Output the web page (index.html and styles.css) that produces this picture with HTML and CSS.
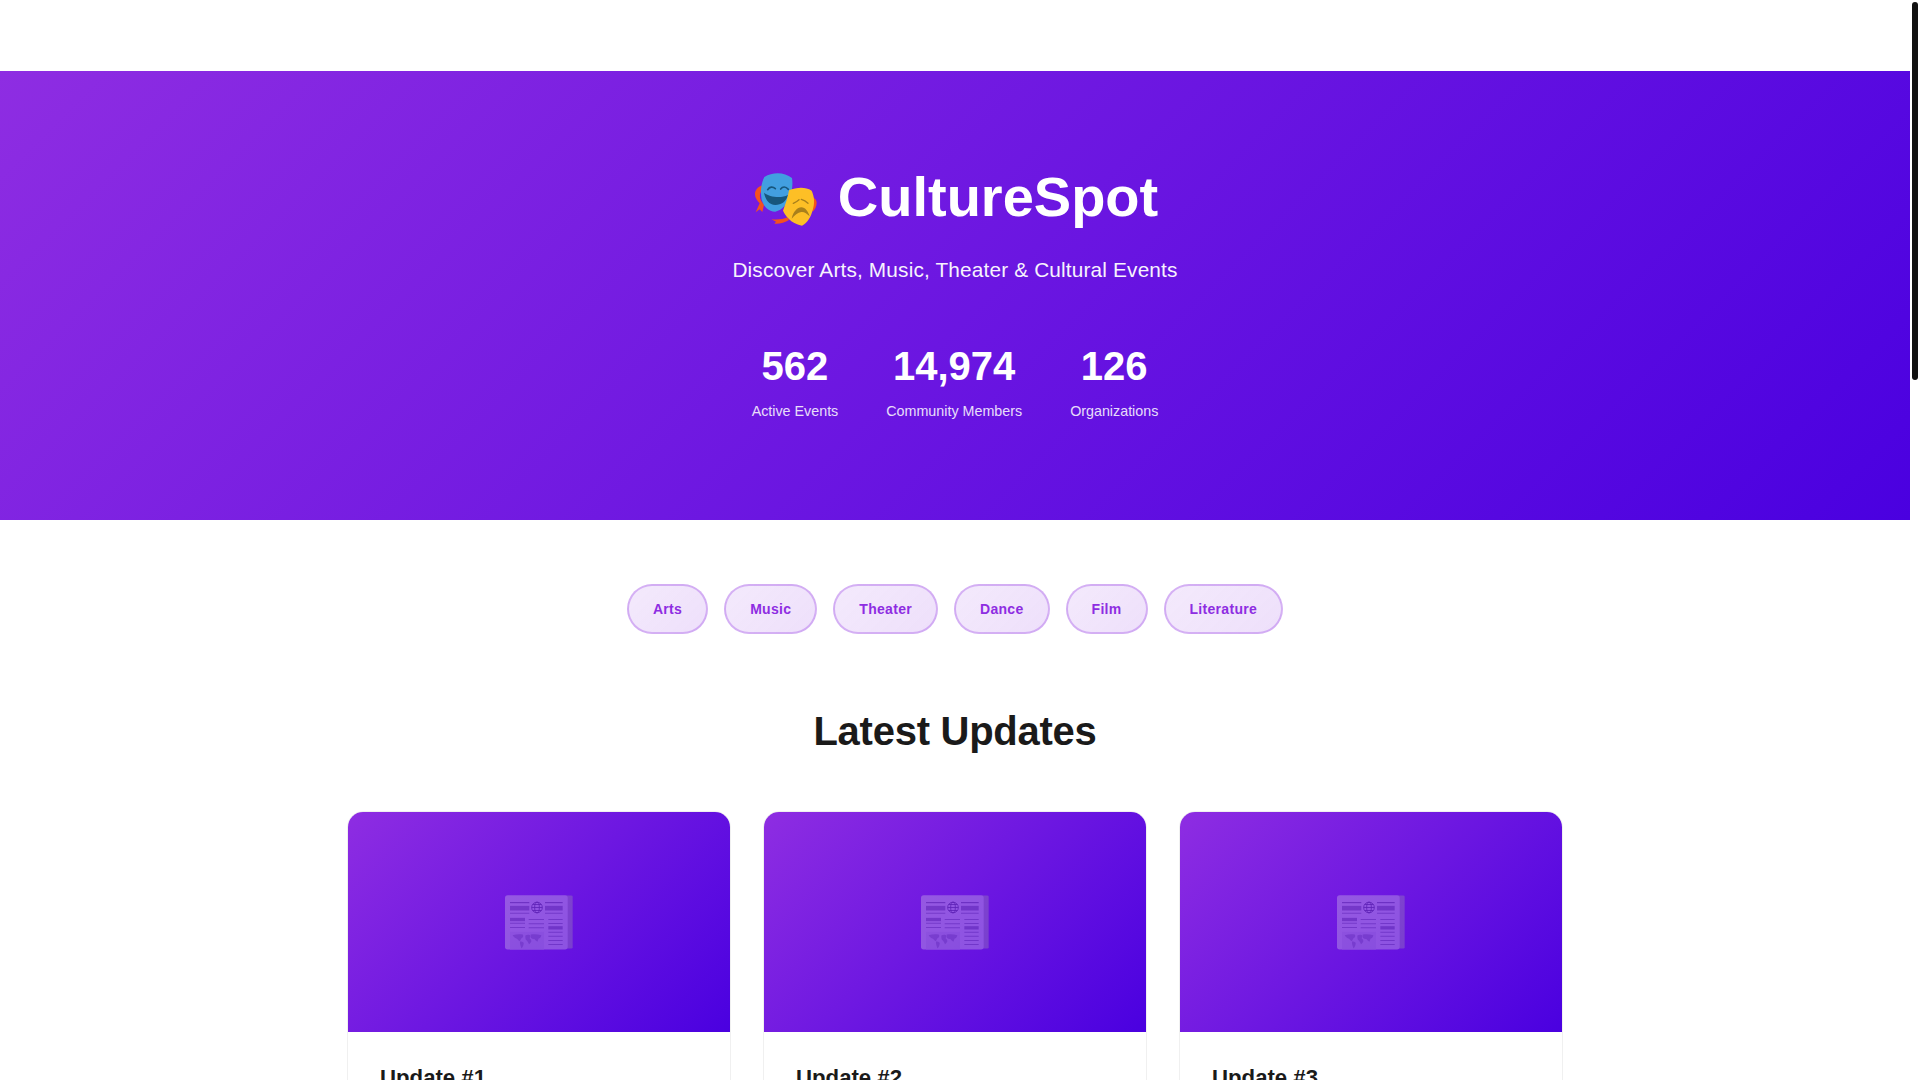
FILE: index.html
```html
<!DOCTYPE html>
<html lang="en">
<head>
    <meta charset="UTF-8">
    <meta name="viewport" content="width=device-width, initial-scale=1.0">
    <title>CultureSpot</title>
    <link rel="stylesheet" href="styles.css">
</head>
<body>
    <!-- Newspaper icon used on the cards -->
    <svg class="icon-defs" xmlns="http://www.w3.org/2000/svg">
        <symbol id="newspaper" viewBox="45 45 204 164">
            <rect x="225" y="46" width="23" height="159" rx="4" fill="#a8a8a8"/>
            <rect x="45" y="45" width="188" height="163" rx="8" fill="#e6e6e6"/>
            <g fill="#55556f">
                <rect x="60" y="66" width="58" height="3"/>
                <rect x="165" y="66" width="53" height="3"/>
                <rect x="60" y="77" width="58" height="14" opacity="0.7"/>
                <rect x="165" y="77" width="53" height="14" opacity="0.7"/>
                <rect x="60" y="98" width="58" height="2"/>
                <rect x="165" y="98" width="53" height="2"/>
                <rect x="60" y="113" width="45" height="10" opacity="0.7"/>
                <rect x="60" y="128" width="45" height="2"/>
                <rect x="60" y="141" width="45" height="2"/>
                <rect x="116" y="117" width="46" height="2"/>
                <rect x="116" y="130" width="46" height="2"/>
                <rect x="116" y="142" width="46" height="2"/>
                <rect x="175" y="117" width="43" height="2"/>
                <rect x="175" y="129" width="43" height="2"/>
                <rect x="175" y="138" width="43" height="10" opacity="0.7"/>
                <rect x="175" y="155" width="43" height="2"/>
                <rect x="175" y="167" width="43" height="2"/>
                <rect x="175" y="180" width="43" height="2"/>
                <rect x="175" y="192" width="43" height="2"/>
            </g>
            <g fill="none" stroke="#3a3a58" stroke-width="2.5">
                <circle cx="141" cy="82" r="16"/>
                <ellipse cx="141" cy="82" rx="7" ry="16"/>
                <path d="M125 82h32M128 73h26M128 91h26"/>
            </g>
            <rect x="60" y="155" width="102" height="53" fill="#d4d4dc"/>
            <path d="M68 165c10-3 20-4 30-2 3 3 2 7-1 10-4 2-5 6-7 10-4-1-6-4-9-7-5-2-10-6-13-11zM90 184c5 0 9 1 11 4 1 5-2 12-6 17-3-6-6-14-5-21zM106 166c4-3 10-3 14-1 2 3 0 6-1 9 3 3 6 6 5 10-2 3-4 7-7 8-3-5-5-11-10-14-1-4-1-8-1-12zM122 163c11-2 22-1 32 2-1 5-4 9-8 10-2 3-2 6-3 9-4-1-7-4-9-7-5 0-9-1-12-5 0-3 0-6 0-9z" fill="#55556f" opacity="0.5"/>
        </symbol>
    </svg>

    <div class="window">
        <div class="page">
            <div class="top-bar"></div>

            <!-- Hero -->
            <header class="hero">
                <h1>
                    <svg class="masks" xmlns="http://www.w3.org/2000/svg" viewBox="24 9 210 201" role="img" aria-label="Performing arts">
                        <g fill="#f4511e">
                            <path d="M60 74c-14 3-26 13-27 26-1 12 6 22 14 30l-12 27 12-9 8 8 5-22c-7-7-14-18-12-30 1-9 8-15 14-18z"/>
                            <path d="M130 172c-12 6-30 8-48 6l14 7-5 6c16 1 32-3 44-11z"/>
                            <path d="M200 109c10 3 18 10 18 19 0 12-6 21-12 27l-4-9c4-6 6-12 5-18-1-3-4-6-8-8z"/>
                        </g>
                        <path d="M61 51c26-16 60-15 83 3 3 18 1 40-8 60-8 19-20 36-42 41-22-2-34-14-41-36-4-22-3-46 8-68z" fill="#429fe0"/>
                        <g fill="none" stroke="#17567d" stroke-width="5" stroke-linecap="round">
                            <path d="M71 89c6-9 15-10 23-3"/>
                            <path d="M110 87c6-8 15-8 23 1"/>
                        </g>
                        <path d="M60 98c16 13 50 18 72 7-5 20-20 30-38 30-18-1-30-16-34-37z" fill="#17567d"/>
                        <path d="M135 91c22-9 48-12 68 1 8 17 10 38 3 58-5 20-15 39-32 47-22-4-44-18-57-45 7-19 15-40 18-61z" fill="#fdbf26"/>
                        <g fill="none" stroke="#a9801c" stroke-width="4" stroke-linecap="round">
                            <path d="M148 130c6-3 12-6 17-11"/>
                            <path d="M172 118c7 2 14 6 20 12"/>
                        </g>
                        <path d="M143 176c4-20 17-34 29-34 12 1 20 11 25 27-8-8-16-14-25-13-11 1-20 10-29 20z" fill="#a9801c"/>
                    </svg>
                    <span>CultureSpot</span>
                </h1>
                <p class="tagline">Discover Arts, Music, Theater &amp; Cultural Events</p>
                <div class="stats">
                    <div class="stat">
                        <div class="stat-number">562</div>
                        <div class="stat-label">Active Events</div>
                    </div>
                    <div class="stat">
                        <div class="stat-number">14,974</div>
                        <div class="stat-label">Community Members</div>
                    </div>
                    <div class="stat">
                        <div class="stat-number">126</div>
                        <div class="stat-label">Organizations</div>
                    </div>
                </div>
            </header>

            <!-- Categories -->
            <nav class="categories">
                <button class="pill">Arts</button>
                <button class="pill">Music</button>
                <button class="pill">Theater</button>
                <button class="pill">Dance</button>
                <button class="pill">Film</button>
                <button class="pill">Literature</button>
            </nav>

            <!-- Updates -->
            <section class="updates">
                <h2>Latest Updates</h2>
                <div class="card-grid">
                    <article class="card">
                        <div class="card-image"><svg class="card-icon"><use href="#newspaper"/></svg></div>
                        <div class="card-body"><h3>Update #1</h3></div>
                    </article>
                    <article class="card">
                        <div class="card-image"><svg class="card-icon"><use href="#newspaper"/></svg></div>
                        <div class="card-body"><h3>Update #2</h3></div>
                    </article>
                    <article class="card">
                        <div class="card-image"><svg class="card-icon"><use href="#newspaper"/></svg></div>
                        <div class="card-body"><h3>Update #3</h3></div>
                    </article>
                </div>
            </section>
        </div>

        <!-- Scrollbar as it appears in the page -->
        <div class="scrollbar"><div class="scrollbar-thumb"></div></div>
    </div>
</body>
</html>
```
FILE: styles.css
```css
/* General */
* { box-sizing: border-box; }
body { margin: 0; font-family: "Liberation Sans", Arial, sans-serif; color: #1a1a1a; background-color: #ffffff; }
.icon-defs { display: none; }
.window { display: flex; height: 100vh; overflow: hidden; }
.page { flex: 1; min-width: 0; }
.top-bar { height: 71px; background-color: #ffffff; }

/* Scrollbar */
.scrollbar { flex: 0 0 10px; padding: 2px; }
.scrollbar-thumb { height: 378px; background-color: #111111; border-radius: 3px; }

/* Hero */
.hero { height: 449px; padding-top: 92px; text-align: center; color: #ffffff; background: linear-gradient(135deg, #8e2de2, #4a00e0); }
.hero h1 { display: flex; justify-content: center; align-items: center; gap: 16px; margin: 0 0 23px; font-size: 56px; line-height: 1.2; font-weight: 700; }
.masks { width: 70px; height: 67px; }
.tagline { margin: 0 0 48px; font-size: 20.8px; line-height: 33px; letter-spacing: 0.16px; opacity: 0.95; }
.stats { display: flex; justify-content: center; gap: 48px; }
.stat-number { margin-bottom: 2px; font-size: 40px; line-height: 1.6; font-weight: 700; }
.stat-label { font-size: 14.3px; line-height: 23px; opacity: 0.85; }

/* Categories */
.categories { display: flex; justify-content: center; gap: 16px; padding: 64px 32px 0; }
.pill { padding: 0 24px; height: 50px; font-family: inherit; font-size: 14px; font-weight: 600; letter-spacing: 0.3px; color: #8e2de2; background: linear-gradient(135deg, rgba(142, 45, 226, 0.1), rgba(142, 45, 226, 0.15)); border: 2px solid rgba(142, 45, 226, 0.3); border-radius: 25px; cursor: pointer; }

/* Updates */
.updates { max-width: 1280px; margin: 0 auto; padding: 73px 32px 0; }
.updates h2 { margin: 0 0 56px; text-align: center; font-size: 40px; line-height: 1.2; font-weight: 700; letter-spacing: -0.26px; }
.card-grid { display: grid; grid-template-columns: repeat(3, 1fr); gap: 32px; }
.card { background-color: #ffffff; border: 1px solid #f0f0f0; border-radius: 16px; overflow: hidden; }
.card-image { display: flex; align-items: center; justify-content: center; height: 220px; background: linear-gradient(135deg, #8e2de2, #4a00e0); }
.card-icon { width: 68px; height: 55px; opacity: 0.3; }
.card-body { padding: 33px 32px 32px; }
.card-body h3 { margin: 0; font-size: 22.2px; font-weight: 700; color: #1a1a1a; }
```
